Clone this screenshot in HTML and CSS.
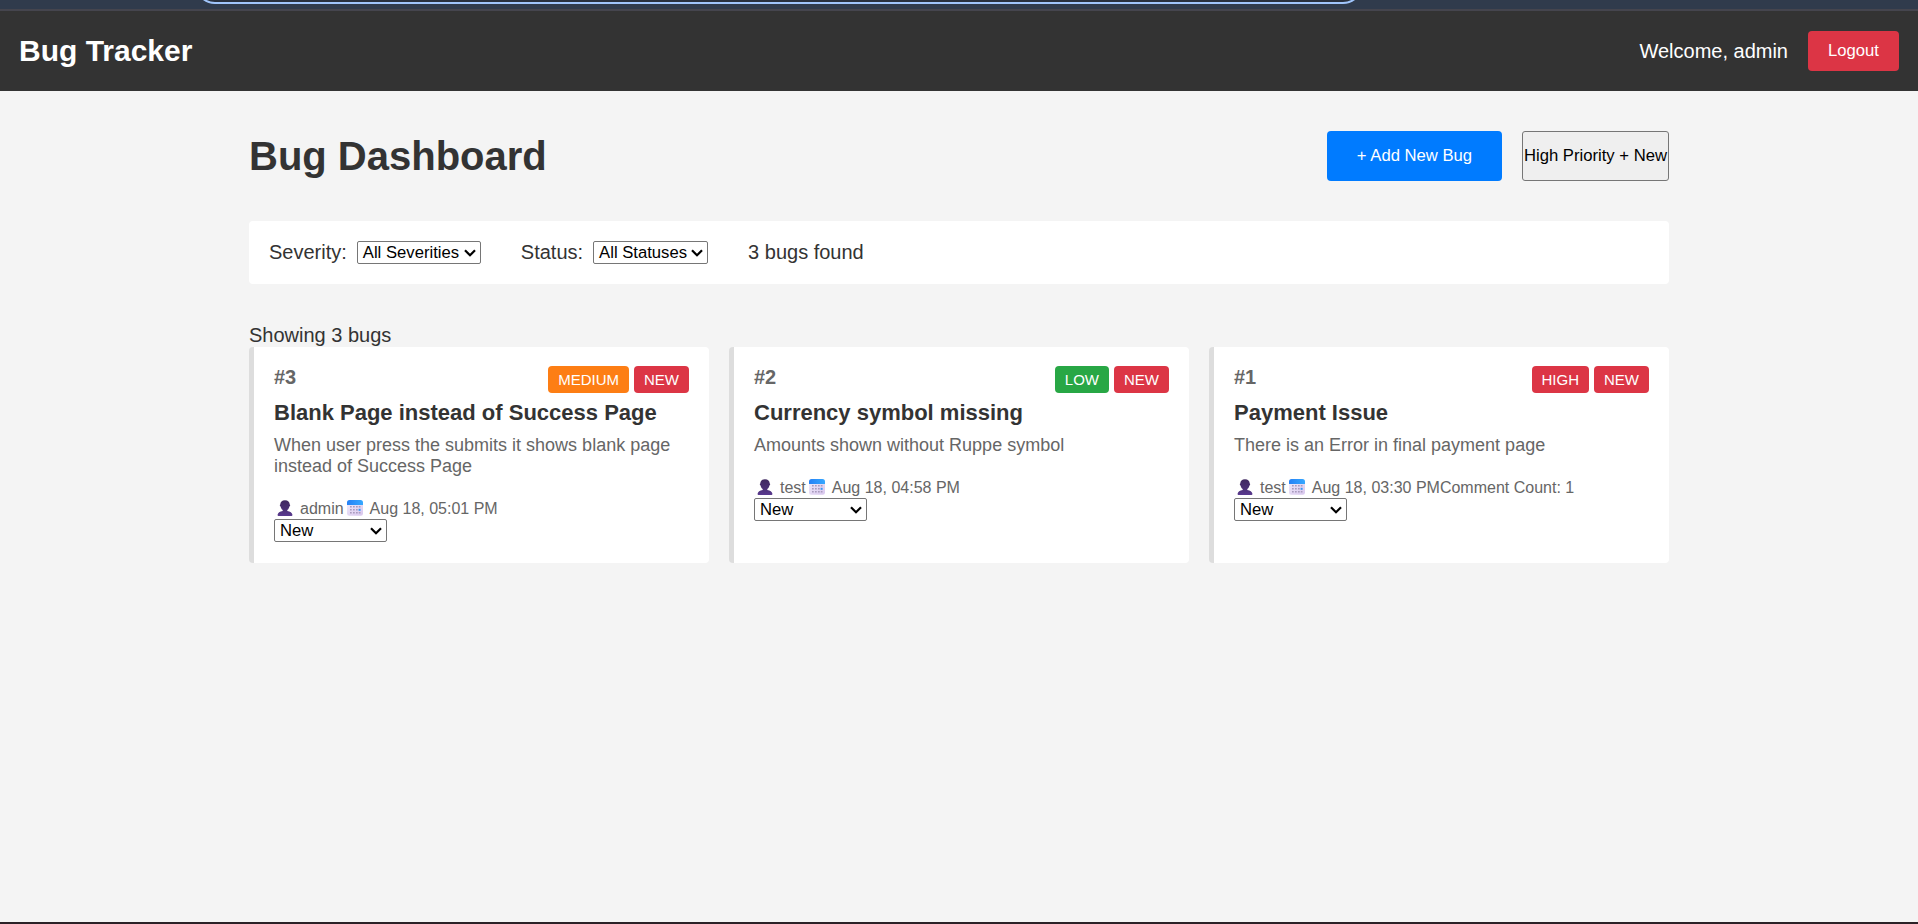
FILE: index.html
```html
<!DOCTYPE html>
<html lang="en">
<head>
<meta charset="utf-8">
<title>Bug Tracker</title>
<link rel="stylesheet" href="styles.css">
</head>
<body>
<svg class="defs" aria-hidden="true">
  <defs>
    <linearGradient id="bust" x1="0" y1="0" x2="0" y2="1"><stop offset="0" stop-color="#402960"/><stop offset=".55" stop-color="#4a2f73"/><stop offset="1" stop-color="#5a3a90"/></linearGradient>
    <linearGradient id="sheet" x1="0" y1="0" x2="1" y2="1"><stop offset="0" stop-color="#eee8f8"/><stop offset="1" stop-color="#d8c6ee"/></linearGradient>
    <linearGradient id="band" x1="0" y1="0" x2="1" y2="0"><stop offset="0" stop-color="#2681f5"/><stop offset="1" stop-color="#36a8ff"/></linearGradient>
    <symbol id="user" viewBox="0 0 16 16">
      <path fill="url(#bust)" d="M8 .2c3 0 4.700 1.800 4.700 4.200.6.100.7 2-.3 2.200-.3 1.700-1.100 2.800-2.100 3.500v.9c2.800.5 4.900 1.600 5.200 4.100 0 .5-.3.800-.8.800H1.300c-.5 0-.8-.3-.8-.8.300-2.500 2.400-3.600 5.200-4.100v-.9c-1-.7-1.800-1.800-2.100-3.500-1-.2-.9-2.100-.3-2.200C3.300 2 5 .2 8 .2z"/>
    </symbol>
    <symbol id="calendar" viewBox="0 0 16 16">
      <path fill="url(#sheet)" d="M0 4h16v9.500a2.300 2.300 0 0 1-2.300 2.300H2.300A2.300 2.300 0 0 1 0 13.500z"/>
      <path fill="url(#band)" d="M2.500 0h11A2.500 2.500 0 0 1 16 2.500V5H0V2.500A2.500 2.500 0 0 1 2.500 0z"/>
      <g fill="#a99bbd"><path d="M6 6h1.700v1.500H6zM9 6h1.700v1.500H9zM11.800 6h1.700v1.500h-1.700zM3 9h1.700v1.500H3zM6 9h1.700v1.500H6zM9 9h1.700v1.500H9zM3 12h1.700v1.500H3zM6 12h1.700v1.500H6zM9 12h1.700v1.500H9zM11.800 12h1.700v1.500h-1.700zM3 6h1.700v1.500H3z"/></g>
      <path fill="#3296f8" d="M11.600 8.800h2v2h-2z"/>
    </symbol>
    <symbol id="chevron" viewBox="0 0 12 8">
      <path d="M1 1.300 6 6.300 11 1.300" fill="none" stroke="#000" stroke-width="2.200"/>
    </symbol>
  </defs>
</svg>
<div class="page">
  <div class="browser-edge"><div class="address-bar"></div></div>
  <header class="navbar">
    <div class="brand">Bug Tracker</div>
    <div class="account"><span class="welcome">Welcome, admin</span><button class="btn logout">Logout</button></div>
  </header>
  <main class="container">
    <div class="heading">
      <h1>Bug Dashboard</h1>
      <div class="actions"><button class="btn add">+ Add New Bug</button><button class="btn priority">High Priority + New</button></div>
    </div>
    <div class="filters">
      <div class="filter"><span>Severity:</span><div class="select severity"><span>All Severities</span><svg><use href="#chevron"/></svg></div></div>
      <div class="filter"><span>Status:</span><div class="select status"><span>All Statuses</span><svg><use href="#chevron"/></svg></div></div>
      <span>3 bugs found</span>
    </div>
    <div class="summary">Showing 3 bugs</div>
    <div class="grid">
      <article class="card">
        <div class="card-top"><span class="number">#3</span><div class="badges"><span class="badge medium">MEDIUM</span><span class="badge new">NEW</span></div></div>
        <h2>Blank Page instead of Success Page</h2>
        <p>When user press the submits it shows blank page instead of Success Page</p>
        <div class="meta"><svg class="emoji"><use href="#user"/></svg><span>admin</span><svg class="emoji cal"><use href="#calendar"/></svg><span>Aug 18, 05:01 PM</span></div>
        <div class="select state"><span>New</span><svg><use href="#chevron"/></svg></div>
      </article>
      <article class="card">
        <div class="card-top"><span class="number">#2</span><div class="badges"><span class="badge low">LOW</span><span class="badge new">NEW</span></div></div>
        <h2>Currency symbol missing</h2>
        <p>Amounts shown without Ruppe symbol</p>
        <div class="meta"><svg class="emoji"><use href="#user"/></svg><span>test</span><svg class="emoji cal"><use href="#calendar"/></svg><span>Aug 18, 04:58 PM</span></div>
        <div class="select state"><span>New</span><svg><use href="#chevron"/></svg></div>
      </article>
      <article class="card">
        <div class="card-top"><span class="number">#1</span><div class="badges"><span class="badge high">HIGH</span><span class="badge new">NEW</span></div></div>
        <h2>Payment Issue</h2>
        <p>There is an Error in final payment page</p>
        <div class="meta"><svg class="emoji"><use href="#user"/></svg><span>test</span><svg class="emoji cal"><use href="#calendar"/></svg><span>Aug 18, 03:30 PM</span><span>Comment Count: 1</span></div>
        <div class="select state"><span>New</span><svg><use href="#chevron"/></svg></div>
      </article>
    </div>
  </main>
  <div class="bottom-edge"></div>
</div>
</body>
</html>
```
FILE: styles.css
```css
* { box-sizing: border-box; margin: 0; padding: 0; }
body { background: #f4f4f4; color: #333; font: 20px/23px Arial, "Liberation Sans", sans-serif; overflow: hidden; }
.defs { position: absolute; width: 0; height: 0; }
.page { height: 924px; display: flex; flex-direction: column; }
.browser-edge { height: 11px; flex: none; background: #303b4c; border-bottom: 2px solid #45454e; overflow: hidden; }
.address-bar { width: 1168px; height: 40px; margin: -36px 0 0 195px; border: 2px solid #a0c5fb; border-radius: 20px; background: #28303e; }
.navbar { height: 80px; flex: none; padding: 0 19px; background: #333; color: #fff; display: flex; align-items: center; justify-content: space-between; }
.brand { font-size: 30px; line-height: 34px; font-weight: bold; }
.account { display: flex; align-items: center; gap: 20px; }
.btn { font: 16.667px/19px Arial, "Liberation Sans", sans-serif; border: 0; border-radius: 4px; white-space: nowrap; padding-bottom: 2px; }
.logout { width: 91px; height: 40px; background: #dc3545; color: #fff; }
.container { width: 1500px; margin: 0 auto; padding: 40px 40px 0; flex: 1; }
.heading { display: flex; justify-content: space-between; align-items: center; height: 50px; margin-bottom: 40px; }
h1 { font-size: 40px; line-height: 46px; }
.actions { display: flex; gap: 20px; }
.add { width: 175px; height: 50px; background: #007bff; color: #fff; }
.priority { width: 147px; height: 50px; background: #efefef; color: #000; border: 1px solid #767676; border-radius: 3px; }
.filters { height: 63px; padding: 0 20px; margin-bottom: 40px; background: #fff; border-radius: 4px; display: flex; align-items: center; gap: 40px; }
.filter { display: flex; align-items: center; gap: 10px; }
.select { height: 23px; padding: 0 4px 0 5px; display: flex; align-items: center; justify-content: space-between; background: #fff; border: 1px solid #767676; border-radius: 2px; color: #000; font-size: 16.667px; line-height: 19px; white-space: nowrap; }
.select svg { width: 12px; height: 8px; }
.severity { width: 124px; }
.status { width: 115px; }
.state { width: 113px; }
.summary { height: 23px; }
.grid { display: grid; grid-template-columns: repeat(3, 1fr); gap: 20px; }
.card { height: 216px; background: #fff; border-left: 5px solid #ddd; border-radius: 4px; padding: 19px 20px; }
.card-top { display: flex; justify-content: space-between; height: 27px; margin-bottom: 7px; }
.number { font-weight: bold; color: #666; }
.badges { display: flex; gap: 5px; }
.badge { height: 27px; padding: 5px 10px; border-radius: 4px; color: #fff; font-size: 15px; line-height: 17px; }
.medium { background: #fd7e14; }
.low { background: #28a745; }
.high, .new { background: #dc3545; }
h2 { font-size: 22px; line-height: 25px; margin-bottom: 10px; }
p { font-size: 18px; line-height: 21px; color: #666; margin-bottom: 20px; }
.meta { display: flex; align-items: center; height: 22px; font-size: 16px; line-height: 20px; color: #666; }
.meta span { padding-top: 2px; }
.emoji { width: 16px; height: 16px; margin: 0 7px 0 3px; }
.cal { margin: 0 7px 0 3px; }
.bottom-edge { height: 2px; flex: none; background: #2b2126; }
```
